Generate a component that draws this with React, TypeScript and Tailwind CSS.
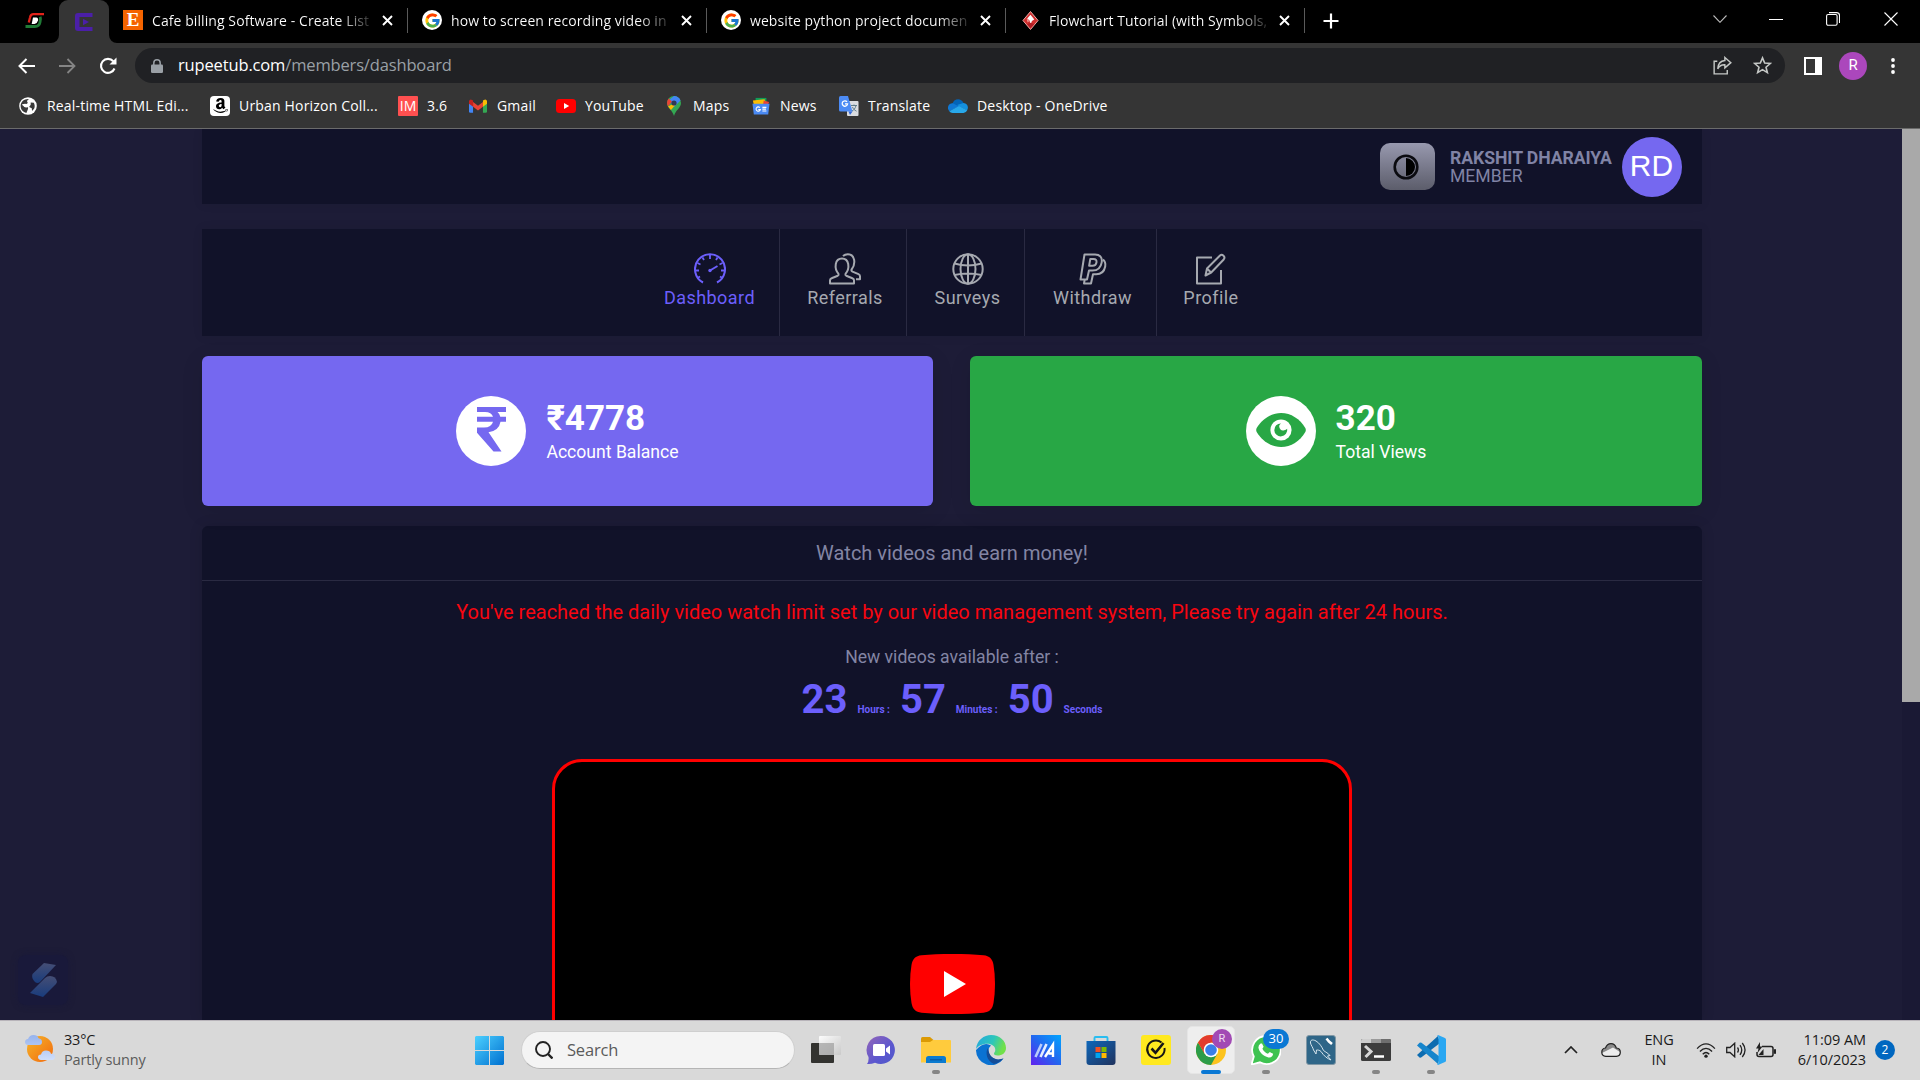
import React from "react";
import { FcGoogle } from "react-icons/fc";
import { FaAmazon } from "react-icons/fa";

type Kids = { children?: React.ReactNode };

const CloseX = () => (
  <svg className="h-[11px] w-[11px] shrink-0" viewBox="0 0 11 11" stroke="#fff" strokeWidth="1.9">
    <path d="M1 1l9 9M10 1l-9 9" />
  </svg>
);

function Tab({ icon, title }: { icon: React.ReactNode; title: string }) {
  return (
    <div className="flex h-[40px] w-[299px] items-center pl-[14px]">
      <div className="flex h-5 w-5 shrink-0 items-center justify-center">{icon}</div>
      <div className="ml-[9px] w-[220px] whitespace-nowrap text-[14px] tracking-[0.08px] text-white">
        <span className="bg-[linear-gradient(to_right,#fff_187px,#222_219px)] bg-clip-text text-transparent">{title}</span>
      </div>
      <div className="ml-[10px] flex h-5 items-center">
        <CloseX />
      </div>
      <div className="ml-auto h-[25px] w-px bg-[#5a5a5a]" />
    </div>
  );
}

function Bookmark({ icon, label, width }: { icon: React.ReactNode; label: string; width: string }) {
  return (
    <div className={"flex shrink-0 items-center " + width}>
      <div className="flex h-5 w-5 shrink-0 items-center justify-center">{icon}</div>
      <span className="ml-[9px] whitespace-nowrap text-[14px] tracking-[0.18px]">{label}</span>
    </div>
  );
}

const Globe = () => (
  <svg viewBox="0 0 20 20" className="h-[18px] w-[18px]">
    <circle cx="10" cy="10" r="9.8" fill="#fff" />
    <path d="M11 2.2l-2.2 2.3 1 2.3-2.3 1.4-3.800-.5 0 1.500 4.500 1.300 2 1.500-.4 2-1.600 3.700C4.500 17 1.700 14 1.800 9.500 2.200 5 6 1.800 11 2.200zM13 6l3.500.5c1.800 3.700 1 7-2 9l-.3-3-3-1.500 1.800-2.500z" fill="#3a3a3a" />
    <path d="M4 8.500q3-2 5 0v3q-3 1-5-3z" fill="#fff" />
  </svg>
);
const Gmail = () => (
  <svg viewBox="0 0 20 15" className="h-[14px] w-[18px]">
    <path d="M0 2v11.500q0 1.500 1.500 1.500H4.500V5z" fill="#4285f4" />
    <path d="M20 2v11.500q0 1.500-1.500 1.500H15.500V5z" fill="#34a853" />
    <path d="M4.500 3L10 7.200 15.500 3v5.300L10 12.500 4.500 8.300z" fill="#ea4335" />
    <path d="M0 2Q.8-.6 3.400.7L4.500 1.500v6.800L0 5z" fill="#c5221f" />
    <path d="M20 2Q19.200-.6 16.600.7l-1.100.8v6.800L20 5z" fill="#fbbc04" />
  </svg>
);
const YtSmall = () => (
  <svg viewBox="0 0 20 14" className="h-[14px] w-5">
    <rect width="20" height="14" rx="3.500" fill="#f00" />
    <path d="M8 4l5.200 3L8 10z" fill="#fff" />
  </svg>
);
const MapsPin = () => (
  <svg viewBox="0 0 14 20" className="h-5 w-[14px]">
    <path d="M7 0a7 7 0 0 1 7 7c0 5-5.500 7-7 13C5.500 14 0 12 0 7a7 7 0 0 1 7-7z" fill="#34a853" />
    <path d="M7 0a7 7 0 0 1 6.500 4.500L7 11 2 4z" fill="#4285f4" />
    <path d="M1.700 2.500L5 5.500 1 10.500C-.6 7.500 0 4.500 1.700 2.500z" fill="#ea4335" />
    <path d="M5 8.500L1 10.500 4 14l5-6z" fill="#fbbc04" />
    <circle cx="7" cy="7" r="2.600" fill="#303a52" />
  </svg>
);
const News = () => (
  <svg viewBox="0 0 20 20" className="h-[18px] w-[18px]">
    <path d="M4 1h12v7H4z" fill="#0f9d58" />
    <path d="M1 4l13-1.500 2 6H2z" fill="#fbbc04" />
    <path d="M13 4l6 1.500-2 5h-5z" fill="#ea4335" />
    <path d="M.5 7.500h19L18 19.500H2z" fill="#4a8af4" />
    <path d="M8.700 11.700a2.400 2.400 0 1 0 .6 2.300H7M11.500 11.500H16M11.500 13.500h4M11.500 15.500H16" stroke="#fff" strokeWidth="1.200" fill="none" />
  </svg>
);
const Translate = () => (
  <svg viewBox="0 0 20 20" className="h-5 w-5">
    <rect x="8" y="5" width="11.500" height="15" rx="1" fill="#dadce0" />
    <path d="M12 9.500h6M15 8.500v1M17 9.500c-.5 3-2.500 4.500-4 5.500M13.500 11c.7 2 2 3 4 4.200" stroke="#607d8b" fill="none" />
    <path d="M1.500 0H9l4.500 15.500H1.500Q0 15.500 0 14V1.500Q0 0 1.500 0z" fill="#4c8bf5" />
    <path d="M8 5.800a2.700 2.700 0 1 0 .6 2H6" stroke="#fff" strokeWidth="1.300" fill="none" />
    <path d="M9.500 15.500h4L11 19z" fill="#3367d6" />
  </svg>
);
const OneDrive = () => (
  <svg viewBox="0 0 20 14" className="h-[14px] w-5">
    <path d="M4.500 4.500C6-.5 13-1.500 15.500 4l-2 5-9-1z" fill="#0364b8" />
    <path d="M15.500 4c4 0 5.500 4.500 3.500 7.500L9 6z" fill="#1490df" />
    <path d="M4.800 4.300C0 4.300-1.500 9.500 1.400 12.300L11 7.500z" fill="#0f78d4" />
    <path d="M1.300 12.200L11 7l8.200 4.300Q18 14 15.500 14h-11Q2.500 14 1.300 12.200z" fill="#28a8ea" />
  </svg>
);
const Diamond = () => (
  <svg viewBox="0 0 18 20" className="h-[19px] w-[17px]">
    <path d="M9 .5l8 9.500-8 9.500L1 10z" fill="#cf2e2e" stroke="#f3b1ad" />
    <path d="M9 4l4 5-2.500 1.500-1.500 4-1-4.500L5.500 8z" fill="#fff" />
    <path d="M9 12.500l4 1.500-4 4-3.500-4z" fill="#b01d24" />
    <path d="M5 8l2.500 2.500L6 12z" fill="#f7a9a4" />
  </svg>
);

const GoogleG = () => (
  <div className="flex h-5 w-5 items-center justify-center rounded-full bg-white"><FcGoogle size={17} /></div>
);

function TabStrip() {
  return (
    <div className="flex h-[43px] bg-black">
      <div className="flex w-[59px] justify-end pr-[14px] pt-[13px]">
        <svg viewBox="0 0 20 16" className="h-4 w-5">
          <path d="M19 1.200H8.500Q5.700 1.200 5 4.500L3.800 9.500" fill="none" stroke="#e2231a" strokeWidth="2.300" />
          <path d="M.5 13.500h9.500q4.200 0 5-4.300.8-4 .2-5.500" fill="none" stroke="#1f7a36" strokeWidth="2.800" />
          <path d="M8 4.500h3.300q2.300.3 1.700 3T9.500 11H6.700z" fill="#fff" />
        </svg>
      </div>
      <div className="relative flex h-[43px] w-[50px] items-center justify-center rounded-t-[9px] bg-[#353535]">
        <svg viewBox="0 0 8 8" className="absolute -left-2 bottom-0 h-2 w-2" fill="#353535"><path d="M8 0v8H0a8 8 0 0 0 8-8z" /></svg>
        <svg viewBox="0 0 8 8" className="absolute -right-2 bottom-0 h-2 w-2" fill="#353535"><path d="M0 0v8h8a8 8 0 0 1-8-8z" /></svg>
        <svg viewBox="0 0 18 18" className="h-[18px] w-[18px]" fill="#4b1fa8">
          <path d="M3 0h14.500v4H4.500v10h13v4H3q-3 0-3-3V3q0-3 3-3z" />
          <path d="M8 5.800L14 9l-6 3.200z" />
        </svg>
      </div>
      <Tab icon={<div className="flex h-5 w-5 items-center justify-center bg-[#f56400] font-['Liberation_Serif',serif] text-[19px] font-bold leading-5 text-white">E</div>} title="Cafe billing Software - Create List" />
      <Tab icon={<GoogleG />} title="how to screen recording video in" />
      <Tab icon={<GoogleG />} title="website python project documen" />
      <Tab icon={<Diamond />} title="Flowchart Tutorial (with Symbols," />
      <svg viewBox="0 0 16 16" className="ml-[18px] mt-[13px] h-4 w-4" stroke="#fff" strokeWidth="2.200"><path d="M8 .5v15M.5 8h15" /></svg>
      <div className="ml-auto flex h-[38px] items-center pr-[22px]">
        <svg viewBox="0 0 14 8" className="mr-[42px] h-2 w-[14px]" stroke="#bbb" strokeWidth="1.100" fill="none"><path d="M.5.500L7 7.300 13.500.5" /></svg>
        <div className="mr-[43px] h-px w-[14px] bg-white" />
        <svg viewBox="0 0 14 14" className="mr-[44px] h-[14px] w-[14px]" stroke="#fff" strokeWidth="1.100" fill="none"><rect x=".6" y="2.500" width="10.500" height="10.800" rx="1.500" /><path d="M3 .6h7.500q3 0 3 3V11" /></svg>
        <svg viewBox="0 0 14 14" className="h-[14px] w-[14px]" stroke="#fff" strokeWidth="1.100"><path d="M.5.500l13 13M13.500.5l-13 13" /></svg>
      </div>
    </div>
  );
}

function Toolbar() {
  return (
    <div className="flex h-[45px] items-center">
      <svg viewBox="0 0 18 16" className="ml-[18px] h-4 w-[18px]" stroke="#fff" strokeWidth="2" fill="none"><path d="M17 8H2M8.500 1L1.500 8l7 7" /></svg>
      <svg viewBox="0 0 18 16" className="ml-[22px] h-4 w-[18px]" stroke="#858585" strokeWidth="1.800" fill="none"><path d="M1 8h15M9.500 1l7 7-7 7" /></svg>
      <svg viewBox="0 0 18 18" className="ml-[23px] h-[18px] w-[18px]" stroke="#fff" strokeWidth="2.100" fill="none"><path d="M15.500 11.500A7 7 0 1 1 14.300 4.300" /><path d="M17.500.5V7.500H10.500z" fill="#fff" stroke="none" /></svg>
      <div className="ml-[18px] flex h-[35px] w-[1650px] items-center rounded-full bg-[#202124] pl-4 pr-[13px]">
        <svg viewBox="0 0 12 14" className="h-[14px] w-3"><rect y="5.500" width="12" height="8.500" rx="1.200" fill="#9aa0a6" /><path d="M2.800 6V4a3.200 3.200 0 0 1 6.400 0v2" stroke="#9aa0a6" strokeWidth="1.500" fill="none" /></svg>
        <div className="ml-[15px] text-[16.500px] tracking-[-0.15px] text-white">rupeetub.com<span className="text-[#9aa0a6]">/members/dashboard</span></div>
        <svg viewBox="0 0 20 20" className="ml-auto h-[19px] w-[19px]" stroke="#c4c7c5" strokeWidth="1.500" fill="none"><path d="M4.500 5.500H1.200V18.800H15v-4M12.500 1.500L18.800 7l-6.300 5.500V9.300Q7.500 9 5 13.500 5.500 5.500 12.500 4.800z" /></svg>
        <svg viewBox="0 0 20 20" className="ml-[21px] h-[19px] w-[19px]" stroke="#c4c7c5" strokeWidth="1.700" fill="none"><path d="M10 2l2.300 5.400 5.900.5-4.500 3.900 1.400 5.700L10 14.400l-5.100 3.100 1.400-5.700L1.800 7.900l5.900-.5z" /></svg>
      </div>
      <div className="ml-[19px] flex h-[18px] w-[18px] border-[2.500px] border-white"><div className="ml-auto h-full w-[5px] bg-white" /></div>
      <div className="ml-[17px] flex h-7 w-7 items-center justify-center rounded-full bg-[#ab47bc] font-[Roboto,sans-serif] text-[15px] text-white">R</div>
      <svg viewBox="0 0 4 16" className="ml-[24px] h-4 w-1" fill="#fff"><circle cx="2" cy="2" r="1.900" /><circle cx="2" cy="8" r="1.900" /><circle cx="2" cy="14" r="1.900" /></svg>
    </div>
  );
}

function BookmarksBar() {
  return (
    <div className="flex h-[41px] items-center border-b border-[#6b6b6b] pb-[5px] pl-[18px] text-white">
      <Bookmark width="w-[192px]" icon={<Globe />} label="Real-time HTML Edi..." />
      <Bookmark width="w-[188px]" icon={<div className="flex h-5 w-5 items-center justify-center rounded-sm bg-white text-black"><FaAmazon size={17} /></div>} label="Urban Horizon Coll..." />
      <Bookmark width="w-[70px]" icon={<div className="flex h-5 w-5 items-center justify-center rounded-[1px] bg-[#ff5050] text-[14px] text-white">IM</div>} label="3.6" />
      <Bookmark width="w-[88px]" icon={<Gmail />} label="Gmail" />
      <Bookmark width="w-[108px]" icon={<YtSmall />} label="YouTube" />
      <Bookmark width="w-[87px]" icon={<MapsPin />} label="Maps" />
      <Bookmark width="w-[88px]" icon={<News />} label="News" />
      <Bookmark width="w-[109px]" icon={<Translate />} label="Translate" />
      <Bookmark width="w-[170px]" icon={<OneDrive />} label="Desktop - OneDrive" />
    </div>
  );
}

function NavItem({ label, width, active, last, children }: Kids & { label: string; width: string; active?: boolean; last?: boolean }) {
  return (
    <div className={"flex h-full flex-col items-center pt-[24px] " + width + (active ? " text-[#6c5ffc]" : " text-[#a6a9b0]") + (last ? "" : " border-r border-[#2a2a42]")}>
      <svg viewBox="0 0 32 32" className="h-8 w-8" fill="none" stroke="currentColor" strokeWidth="2" strokeLinejoin="round">{children}</svg>
      <span className="mt-[-1px] text-[18px] leading-[27px] tracking-[0.45px]">{label}</span>
    </div>
  );
}

function NavBar() {
  return (
    <nav className="mt-[25px] flex h-[107px] justify-center bg-[#111229] shadow-[0_0_10px_rgba(0,0,0,0.08)]">
      <NavItem label="Dashboard" width="w-[140px]" active>
        <path d="M9 29.500A15 15 0 1 1 23 29.500" />
        <path d="M16 2v4M8.500 4.500l1.500 2.500M23.500 4.500L22 7M3.500 10l3 1.500M28.500 10l-3 1.500M1 17.500h4M27 17.500h4M3.500 25l2.500-1.500M28.500 25L26 23.500" strokeWidth="1.800" />
        <path d="M16 17.500l7.500-4.500" strokeWidth="2" /><circle cx="16" cy="17.500" r="1.700" fill="currentColor" stroke="none" />
      </NavItem>
      <NavItem label="Referrals" width="w-[127px] pl-1">
        <path d="M1 30.500v-3.300q0-1.400 1.600-2l6.200-2.500q1.200-.6.700-1.900C6.800 17.800 6.300 14 6.800 11c.6-3.300 3-5.500 6.200-5.500s5.600 2.200 6.200 5.500c.5 3 0 6.800-2.700 9.800-.5 1.300-.5 1.300.7 1.900l6.200 2.500q1.600.6 1.600 2v3.300z" />
        <path d="M14 3Q16 1.200 18.800 1.200c3.200 0 5.700 2.200 6.300 5.500.5 3 0 6.800-2.500 9.800-.6 1.300 0 1.700.9 2.200l6 2.500q1.500.6 1.500 2v3H27" />
      </NavItem>
      <NavItem label="Surveys" width="w-[118px] pl-1">
        <circle cx="16" cy="16" r="14.700" /><ellipse cx="16" cy="16" rx="7.500" ry="14.700" /><path d="M16 1v30M2.500 10.500Q9 12.500 16 12.500t13.500-2M2.500 22Q9 20.500 16 20.500T29.500 22" />
      </NavItem>
      <NavItem label="Withdraw" width="w-[132px] pl-1">
        <path d="M7.500 1.500H18c5 0 7.500 3 6.700 7.800-.9 5.500-4.300 8.200-9.200 8.200H12l-2 9H3.500z" />
        <path d="M13.300 6h3.200q3.500 0 3 3.300t-4 3.500h-3.400z" />
        <path d="M26 6.500q3 2.500 2.200 7c-1 5.200-4.200 7.800-9 7.800H16l-2 9.200H7l.7-4" />
      </NavItem>
      <NavItem label="Profile" width="w-[107px] pl-px" last>
        <path d="M17 4.500H2v26h24V17" /><path d="M10.500 22.500l1.500-7L25 2.500q1.700-1.500 3.500.2t.2 3.800l-12.500 13z M12 15.500l4 4" />
      </NavItem>
    </nav>
  );
}

const Rupee = () => (
  <svg viewBox="0 0 29 45" className="h-[45px] w-[29px]" fill="#7568f0">
    <path d="M0 0h29v5h-8.500q2.300 2 2.800 4.700H29v5h-5.500q-1.500 9-12 10.500L24.500 44.500h-8L0 25.800v-5.300h7q7.500 0 9-5.800H0v-5h16Q14.500 5 8 5H0z" />
  </svg>
);

const Eye = () => (
  <svg viewBox="0 0 50 34" className="h-[34px] w-[50px]">
    <path d="M25 0c10 0 19 6 24.300 15q1 2 0 4C44 28 35 34 25 34S6 28 .7 19q-1-2 0-4C6 6 15 0 25 0z" fill="#28a745" />
    <circle cx="25" cy="17" r="10.600" fill="#fff" />
    <path d="M25 10.400a3.800 3.800 0 0 0 3.200 6.800q1.800 0 3-1.400A6.500 6.500 0 1 1 25 10.400z" fill="#28a745" />
  </svg>
);

function StatCard({ icon, value, label, color }: { icon: React.ReactNode; value: string; label: string; color: string }) {
  return (
    <div className={"flex h-[150px] items-center justify-center rounded-md shadow-[0_5px_22px_rgba(0,0,0,0.1)] " + color}>
      <div className="flex h-[70px] w-[70px] items-center justify-center rounded-full bg-white pb-[3px]">{icon}</div>
      <div className="ml-5 text-white">
        <div className="text-[35px] font-bold leading-[42px]">{value}</div>
        <div className="text-[17.600px] leading-[25px]">{label}</div>
      </div>
    </div>
  );
}

function PageHeader() {
  return (
    <div className="flex h-[75px] items-center justify-end bg-[#111229] pr-5 shadow-[0_0_10px_rgba(0,0,0,0.08)]">
      <div className="flex h-[47px] w-[55px] items-center justify-center rounded-[10px] bg-gradient-to-b from-[#9899af] to-[#5c5d6b]">
        <svg viewBox="0 0 26 26" className="mr-[3px] h-[26px] w-[26px]"><circle cx="13" cy="13" r="11.300" fill="none" stroke="#0b0b10" strokeWidth="2.600" /><path d="M13 4a9 9 0 0 1 0 18z" fill="#000" /></svg>
      </div>
      <div className="ml-[15px] w-[163px] whitespace-nowrap text-[17.600px] leading-[18px] text-[#8083a5]">
        <div className="font-bold tracking-[-0.05px]">RAKSHIT DHARAIYA</div>
        <div>MEMBER</div>
      </div>
      <div className="ml-[9px] flex h-[60px] w-[60px] items-center justify-center rounded-full bg-[#7568f0] pb-px pr-px font-['Liberation_Sans',sans-serif] text-[30px] leading-none text-white">RD</div>
    </div>
  );
}

function Unit({ n, label }: { n: string; label: string }) {
  return (
    <>
      <span className="text-[40px] font-bold leading-[48px]">{n}</span>
      <span className="ml-[10px] mr-[10px] text-[10px] font-bold last:mr-0">{label}</span>
    </>
  );
}

function VideoPanel() {
  return (
    <section className="mt-5 flex h-[494px] flex-col items-center overflow-hidden rounded-t-md bg-[#111229] shadow-[0_0_14px_rgba(0,0,0,0.12)]">
      <h2 className="flex h-[55px] w-full shrink-0 items-center justify-center border-b border-[#2a2a42] text-[20px] text-[#8385a4]">Watch videos and earn money!</h2>
      <p className="mt-[16px] whitespace-nowrap text-[20px] leading-[30px] text-[#f80610]">You've reached the daily video watch limit set by our video management system, Please try again after 24 hours.</p>
      <p className="mt-[17px] text-[17.600px] leading-[26px] text-[#8385a4]">New videos available after :</p>
      <div className="mt-[6px] flex items-baseline whitespace-nowrap text-[#6c5ffc]">
        <Unit n="23" label="Hours :" />
        <Unit n="57" label="Minutes :" />
        <Unit n="50" label="Seconds" />
      </div>
      <div className="mt-[35px] flex h-[450px] w-[800px] shrink-0 justify-center rounded-[30px] border-[3px] border-[#f00] bg-black pt-[192px]">
        <svg viewBox="0 0 85 60" className="h-[60px] w-[85px]">
          <path d="M42.500 0c12 0 22 .4 31 1.300 6 .7 9 3.700 10 9.700q1.500 9 1.500 19t-1.500 19c-1 6-4 9-10 9.700-9 .9-19 1.300-31 1.300s-22-.4-31-1.300c-6-.7-9-3.700-10-9.700Q0 40 0 30t1.500-19c1-6 4-9 10-9.700C20.500.4 30.500 0 42.500 0z" fill="#f00" />
          <path d="M34 17l22 13-22 13z" fill="#fff" />
        </svg>
      </div>
    </section>
  );
}

function SMark() {
  return (
    <svg viewBox="0 0 50 50" className="h-[50px] w-[50px] rounded-lg bg-[#19193a] shadow-[0_0_6px_#19193a]">
      <defs><linearGradient id="smark" x1="0" y1="0" x2="0" y2="1"><stop offset="0" stopColor="#454e75" /><stop offset="1" stopColor="#193c7c" /></linearGradient></defs>
      <path d="M26 8l12 2-16 17q-2.500 2-5 0-4-4-2.500-8z" fill="url(#smark)" /><path d="M12 38l15-15q2-2 5-2 6 0 7 6l-1 2-13 13z" fill="url(#smark)" />
    </svg>
  );
}

const TaskIcon = ({ children, mark }: Kids & { mark?: boolean }) => (
  <div className="relative flex h-12 w-[55px] shrink-0 items-center justify-center">
    <svg viewBox="0 0 30 30" className="h-[30px] w-[30px]">{children}</svg>
    {mark && <div className="absolute bottom-0 h-1 w-2 rounded-full bg-[#858585]" />}
  </div>
);

function Taskbar() {
  return (
    <footer className="flex h-[60px] items-center border-t border-[#b8b4ba] bg-[#d9d9d9] pb-px text-[#1b1b1b]">
      <svg viewBox="0 0 30 30" className="ml-[25px] mt-[-4px] h-[30px] w-[30px]">
        <defs><linearGradient id="sun" x1="0" y1="0" x2="1" y2="1"><stop offset="0" stopColor="#f5b52a" /><stop offset="1" stopColor="#f2690d" /></linearGradient><linearGradient id="cl" x1="0" y1="0" x2="0" y2="1"><stop offset="0" stopColor="#96b3ee" /><stop offset="1" stopColor="#cfdefa" /></linearGradient></defs>
        <circle cx="15" cy="16" r="13" fill="url(#sun)" />
        <path d="M3 12q-3-.4-3-3t3-3q1.500-4 5.500-4t5 3.300Q17 6 17 9t-3 3zM16 27q-3-.4-3-3t3-2.600q1-4 5-4t5 3.300q4 0 4 3T27 27z" fill="url(#cl)" />
      </svg>
      <div className="ml-[9px] mt-[-1px] w-[398px] text-[14.500px] leading-[20px]">
        <div className="tracking-[-0.2px]">33°C</div>
        <div className="tracking-[-0.15px] text-[#5b5b5b]">Partly sunny</div>
      </div>
      <div className="flex h-12 w-[55px] shrink-0 items-center justify-center">
        <svg viewBox="0 0 29 29" className="h-[29px] w-[29px]"><defs><linearGradient id="win" x1="0" y1="0" x2="1" y2="1"><stop offset="0" stopColor="#4cd0ff" /><stop offset="1" stopColor="#0070d0" /></linearGradient></defs><path d="M1 0h13v14H0V1zM15 0h13l1 1v13H15zM0 15h14v14H1l-1-1zM15 15h14v13l-1 1H15z" fill="url(#win)" /></svg>
      </div>
      <div className="ml-[4px] flex h-[38px] w-[274px] shrink-0 items-center rounded-full border border-[#cfcfcf] border-b-[#b5b5b5] bg-[#f4f4f4] pl-[13px]">
        <svg viewBox="0 0 18 18" className="h-[18px] w-[18px]" fill="none" stroke="#222" strokeWidth="1.900"><circle cx="8" cy="8" r="7" /><path d="M13 13l4.500 4.500" strokeWidth="2.400" /></svg>
        <span className="ml-[14px] mt-px text-[16.500px] tracking-[-0.2px] text-[#5b5b5b]">Search</span>
      </div>
      <div className="ml-[3px] flex">
        <TaskIcon>
          <defs><linearGradient id="tv" x1="0" y1="0" x2="1" y2="1"><stop offset="0" stopColor="#fff" /><stop offset="1" stopColor="#c8c8c8" /></linearGradient></defs>
          <rect y="8" width="23" height="20" rx="1" fill="#333330" /><rect x="8" y="1" width="22" height="19" rx="1" fill="url(#tv)" opacity=".93" /><rect x="8" y="8" width="15" height="12" fill="#a3a3a3" opacity=".7" />
        </TaskIcon>
        <TaskIcon>
          <defs><linearGradient id="chat" x1="0" y1="0" x2="1" y2="1"><stop offset="0" stopColor="#9365b8" /><stop offset=".6" stopColor="#5b57cf" /><stop offset="1" stopColor="#5059c9" /></linearGradient></defs>
          <path d="M15 1a14 14 0 1 1-6 26.700Q5 29.500 1 29q2-2.500 1.500-7A14 14 0 0 1 15 1z" fill="url(#chat)" /><rect x="7" y="9" width="12" height="12" rx="1.500" fill="#fff" /><path d="M20 13.500l4-3v9l-4-3z" fill="#fff" />
        </TaskIcon>
        <TaskIcon mark>
          <path d="M0 3.500Q0 2 1.500 2H9l4 3.500L10 9H0z" fill="#dc9a04" /><path d="M0 7h9l3-2h17q1 0 1 1v21.500H0z" fill="#ffcb3d" /><path d="M5 28v-4.500Q5 21 7.500 21h15q2.500 0 2.500 2.500V28z" fill="#0b7bd0" /><path d="M9 24.800h12" stroke="#0a4f96" />
        </TaskIcon>
        <TaskIcon>
          <defs><linearGradient id="edg" x1="0" y1="0" x2="1" y2=".3"><stop offset="0" stopColor="#25a7e0" /><stop offset=".6" stopColor="#2cc6bb" /><stop offset="1" stopColor="#70e04a" /></linearGradient></defs>
          <path d="M0 15a15 15 0 0 0 27.500 8.500q-4 2-7 1c-5-1.500-8-5-8-9q0-3 2.500-5Q8 6 0 15z" fill="#0a72d2" /><path d="M0 14C1 5 8 0 15 0c9 0 15 6 15 13 0 5-4 7.500-8.500 7.500-2.500 0-3.500-1-3.500-2 0-1 1.300-1.500 1.300-3.800 0-3.500-3.700-6-8.300-6C6 8.700 2 11 0 14z" fill="url(#edg)" /><path d="M12 13c-3 4-1.500 13 6 16 4-.7 7.500-3 9.500-5.700-5 2.300-14 2-15.500-10.300z" fill="#144d98" />
        </TaskIcon>
        <TaskIcon>
          <defs><linearGradient id="asus" x1="0" y1="1" x2="1" y2="0"><stop offset="0" stopColor="#6121ef" /><stop offset=".5" stopColor="#2267ef" /><stop offset="1" stopColor="#00a5ff" /></linearGradient></defs>
          <rect width="30" height="30" fill="url(#asus)" /><path d="M4.500 22L10.500 9" stroke="#b9ccfb" strokeWidth="2.600" /><path d="M9.500 22L15.500 9" stroke="#e4ecff" strokeWidth="2.600" /><path d="M14 22L22 9.500V22M17.500 18.500H22" stroke="#fff" strokeWidth="2.400" fill="none" />
        </TaskIcon>
        <TaskIcon>
          <defs><linearGradient id="store" x1="0" y1="0" x2="1" y2="1"><stop offset="0" stopColor="#0e67ba" /><stop offset="1" stopColor="#20335e" /></linearGradient></defs>
          <path d="M8.500 7V3Q8.500 2 9.500 2h11q1 0 1 1v4" fill="none" stroke="#29bdf0" strokeWidth="1.900" /><path d="M.5 6h29v21q0 3-3 3h-23q-3 0-3-3z" fill="url(#store)" /><path d="M9.500 12h5v5h-5z" fill="#f25022" /><path d="M15.500 12h5v5h-5z" fill="#7fba00" /><path d="M9.500 18h5v5h-5z" fill="#00a4ef" /><path d="M15.500 18h5v5h-5z" fill="#ffb900" />
        </TaskIcon>
        <TaskIcon>
          <rect width="30" height="30" rx="3" fill="#ffe920" /><path d="M20.500 7.600A8.700 8.700 0 1 0 23.500 13" fill="none" stroke="#161616" strokeWidth="2" /><path d="M10.500 13.500l4 4.300L22.500 8" fill="none" stroke="#161616" strokeWidth="2.600" />
        </TaskIcon>
        <div className="relative flex h-12 w-[55px] items-center justify-center">
          <div className="flex h-12 w-12 items-center justify-center rounded-[5px] border border-[#e5e5e5] bg-[#eee]">
            <svg viewBox="0 0 30 30" className="h-[30px] w-[30px]">
              <circle cx="15" cy="15" r="15" fill="#fcc31e" />
              <path d="M2 7.500A15 15 0 0 0 15 30l6.300-11.300L8.700 18.700z" fill="#2c9c48" />
              <path d="M2 7.500A15 15 0 0 1 28 7.500H15l-6.500 11z" fill="#e33b2e" />
              <circle cx="15" cy="15" r="7.300" fill="#fff" /><circle cx="15" cy="15" r="5.800" fill="#397fe8" />
            </svg>
          </div>
          <div className="absolute left-[29px] top-[3px] flex h-5 w-5 items-center justify-center rounded-full bg-[#a24ab4] font-[Roboto,sans-serif] text-[11px] text-[#eddcf0]">R</div>
          <div className="absolute bottom-0 h-1 w-5 rounded-full bg-[#0a78d4]" />
        </div>
        <div className="relative flex h-12 w-[55px] items-center justify-center">
          <svg viewBox="0 0 30 30" className="h-[30px] w-[30px]"><path d="M15.500 1a14 14 0 1 1-6.500 26.300L.5 29.500l2.300-8A14 14 0 0 1 15.500 1z" fill="#3fc351" stroke="#fff" strokeWidth="1.800" /><path d="M11 8.500l1.600 3.300-1.200 2c1.300 2.500 3 4 5.500 5l1.900-1.700 3.300 1.700c-.3 3-2.300 4-4.700 3.600-5-.9-9.500-5.500-10-9.800q0-3 2.200-4.200z" fill="#fff" /></svg>
          <div className="absolute left-[25px] top-[3px] flex h-5 w-[26px] items-center justify-center rounded-full bg-[#0a78d4] text-[13px] text-white">30</div>
          <div className="absolute bottom-0 h-1 w-2 rounded-full bg-[#858585]" />
        </div>
        <TaskIcon>
          <rect x=".5" y=".5" width="29" height="29" rx="2.500" fill="#2f6688" stroke="#8097a5" /><path d="M4.500 8C4 5 6.500 4 10 6c3.500 2 6 6 7.500 9.500 2 1.500 5 3 6.500 5l-2.500.5 3.500 4c-4-1.500-7-4-10-8.500-1.500-1.500-3-1.500-4.500-1.500l-.5 4-2.500-4C7 12.500 5 10.500 4.500 8z" fill="none" stroke="#d5e4ec" strokeWidth="1" /><path d="M20.500 3.500l2.500 3 3 2.500" stroke="#fff" strokeWidth="2.600" />
        </TaskIcon>
        <TaskIcon mark>
          <rect y="4" width="30" height="22" rx="1.500" fill="#3c3c3c" /><path d="M1.500 4h8.500v4H0V5.500Q0 4 1.500 4z" fill="#cfcfcf" /><path d="M10 4h10v4H10z" fill="#9a9a9a" /><path d="M20 4h8.500Q30 4 30 5.500V8H20z" fill="#6e6e6e" /><path d="M4 11l6 5.500-5.500 5.500" fill="none" stroke="#d7d7d7" strokeWidth="3" /><path d="M13 21.500h10" stroke="#fff" strokeWidth="2.500" />
        </TaskIcon>
        <TaskIcon mark>
          <path d="M22 1L1 20l2.500 2.500Q4.500 23 5.500 22.300L24 8z" fill="#0d6cb0" /><path d="M22 29L1 10.500 3.500 7.800q1-.8 2 0L24 22z" fill="#1685cc" /><path d="M22 0l7 3q1 .5 1 1.500v21q0 1-1 1.500l-7 3q-1.500 0 .5-2V2q-2-2-.5-2z" fill="#2aa7f2" />
        </TaskIcon>
      </div>
      <div className="ml-auto flex items-center">
        <svg viewBox="0 0 14 8" className="h-2 w-[14px]" stroke="#222" strokeWidth="1.700" fill="none"><path d="M1 7l6-6 6 6" /></svg>
        <svg viewBox="0 0 20 14" className="ml-[23px] h-[14px] w-5"><path d="M4.500 5q1.500-4.300 5.500-4.300T15.300 5q4 .3 4 4.200t-4 4.100H4.800Q.8 13 .8 9.200T4.500 5z" fill="#8a8a8a" /><path d="M1 10l11-5.500L19 9q0 4-4 4H5q-4 0-4-3z" fill="#ededed" /><path d="M4.500 5q1.500-4.300 5.500-4.300T15.300 5q4 .3 4 4.200t-4 4.100H4.800Q.8 13 .8 9.200T4.500 5z" fill="none" stroke="#222" strokeWidth="1.200" /></svg>
        <div className="ml-[17px] w-[42px] text-center text-[14.500px] leading-[20px] tracking-[-0.1px]">ENG<br />IN</div>
        <svg viewBox="0 0 20 16" className="ml-[16px] h-[15px] w-5" fill="none" stroke="#222" strokeWidth="1.400"><path d="M.5 6Q10-4 19.500 6M3.500 9Q10 2.300 16.500 9M6.500 12Q10 8.300 13.500 12" /><circle cx="10" cy="14" r="1.800" fill="#222" stroke="none" /></svg>
        <svg viewBox="0 0 20 16" className="ml-[10px] h-4 w-5" fill="none" stroke="#222" strokeWidth="1.300"><path d="M.7 5.500H4L8.700 1.200v13.600L4 10.500H.7zM11.500 5.500q1.800 2.500 0 5M14 3.200q3.500 4.800 0 9.600M16.300 1q5.500 7 0 14" /></svg>
        <svg viewBox="0 0 20 17" className="ml-[10px] h-[17px] w-5" fill="none" stroke="#222" strokeWidth="1.500"><path d="M6 4.500h9q2 0 2 2v6q0 2-2 2H3q-2 0-2-2V10" /><path d="M18 7.500h2v4h-2z" fill="#222" strokeWidth=".5" /><path d="M4 0L0 6.500h2.500L1.500 11 6.500 4.500H4z" fill="#222" stroke="none" /><path d="M2.500 13l5-6v6z" fill="#222" stroke="none" /></svg>
        <div className="mt-[-1px] w-[90px] whitespace-nowrap text-right text-[14.500px] leading-[20px] tracking-[-0.05px]">11:09 AM<br />6/10/2023</div>
        <div className="ml-[9px] mr-[25px] flex h-5 w-5 items-center justify-center rounded-full bg-[#0067c0] text-[12px] text-white">2</div>
      </div>
    </footer>
  );
}

export default function App() {
  return (
    <div className="flex h-[1080px] w-[1920px] flex-col overflow-hidden bg-[#1d1c37] font-['Open_Sans',sans-serif]">
      <header className="h-[129px] shrink-0 bg-[#353535]">
        <TabStrip />
        <Toolbar />
        <BookmarksBar />
      </header>
      <div className="flex h-[891px] overflow-hidden">
        <div className="flex w-[202px] flex-col justify-end pb-[15px] pl-[18px]"><SMark /></div>
        <main className="w-[1500px] font-[Roboto,sans-serif]">
          <PageHeader />
          <NavBar />
          <div className="mt-5 grid grid-cols-[731px_732px] justify-between">
            <StatCard color="bg-[#7568f0]" icon={<Rupee />} value="₹4778" label="Account Balance" />
            <StatCard color="bg-[#28a745]" icon={<Eye />} value="320" label="Total Views" />
          </div>
          <VideoPanel />
        </main>
        <div className="ml-auto h-full w-[18px] bg-[#1a1934]"><div className="h-[573px] bg-[#a9a9a9]" /></div>
      </div>
      <Taskbar />
    </div>
  );
}
